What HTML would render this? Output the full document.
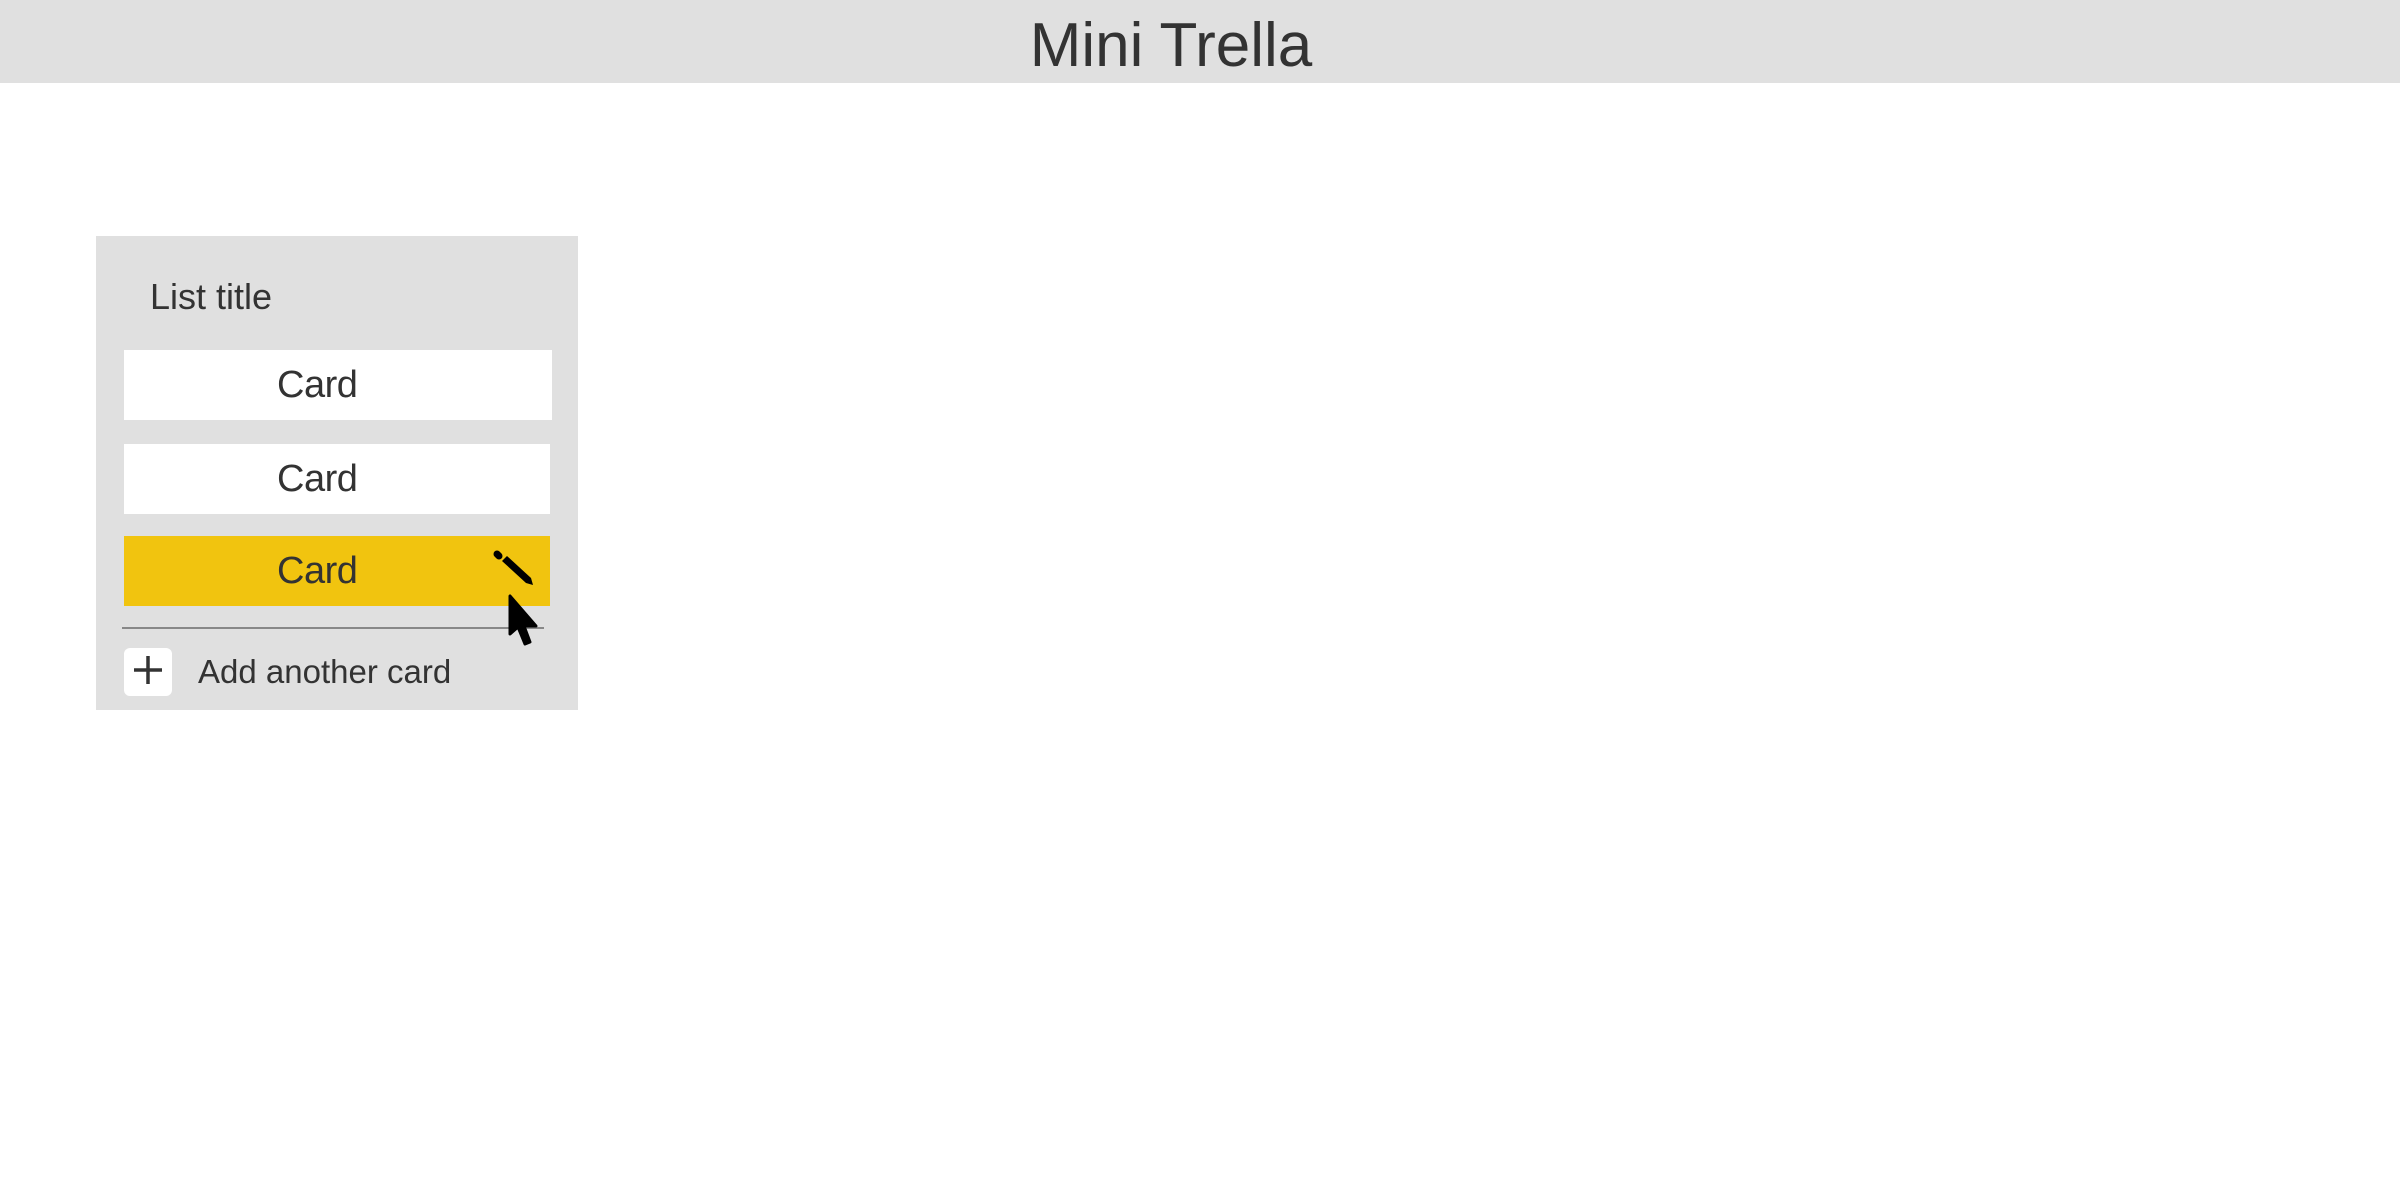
<!DOCTYPE html>
<html><head><style>
body{margin:0;width:2400px;height:1200px;background:#fff;font-family:"Liberation Sans",sans-serif;color:#333;position:relative;overflow:hidden}
.hd{position:absolute;left:0;top:0;width:2400px;height:83px;background:#e0e0e0}
.hd span{position:absolute;left:0;width:2342px;text-align:center;top:11px;font-size:62px;line-height:70px}
.panel{position:absolute;left:96px;top:236px;width:482px;height:474px;background:#e0e0e0}
.t{position:absolute;left:150px;top:275px;font-size:36px;line-height:44px}
.card{position:absolute;left:124px;width:427px;height:70px;background:#fff;font-size:38px;line-height:70px}
.card span{position:absolute;left:153px;letter-spacing:-0.5px}
.line{position:absolute;left:122px;top:627px;width:422px;height:2px;background:#888}
.plus{position:absolute;left:124px;top:648px;width:48px;height:48px;background:#fff;border-radius:6px}
.add{position:absolute;left:198px;top:650px;font-size:33px;line-height:44px}
</style></head><body>
<div class="hd"><span>Mini Trella</span></div>
<div class="panel"></div>
<div class="t">List title</div>
<div class="card" style="top:350px;width:428px"><span>Card</span></div>
<div class="card" style="top:444px;width:426px"><span>Card</span></div>
<div class="card" style="top:536px;width:426px;background:#f1c40f"><span>Card</span></div>
<svg style="position:absolute;left:490px;top:548px" width="50" height="45" viewBox="0 0 50 45"><line x1="7" y1="6" x2="9" y2="8" stroke="#000" stroke-width="7" stroke-linecap="round"/><path d="M12 13 L36 35 L43 37 L41 30 L17 8 Z" fill="#000"/></svg>
<div class="line"></div>
<svg style="position:absolute;left:504px;top:594px" width="40" height="58" viewBox="0 0 40 58"><path d="M6 2 L6 40 L14 33 L21 50 L26 48 L20 32 L32 32 Z" fill="#000" stroke="#000" stroke-width="3" stroke-linejoin="round"/></svg>
<div class="plus"><svg width="48" height="48"><path d="M24 8V36M10 22H38" stroke="#333" stroke-width="3.5"/></svg></div>
<div class="add">Add another card</div>
</body></html>
